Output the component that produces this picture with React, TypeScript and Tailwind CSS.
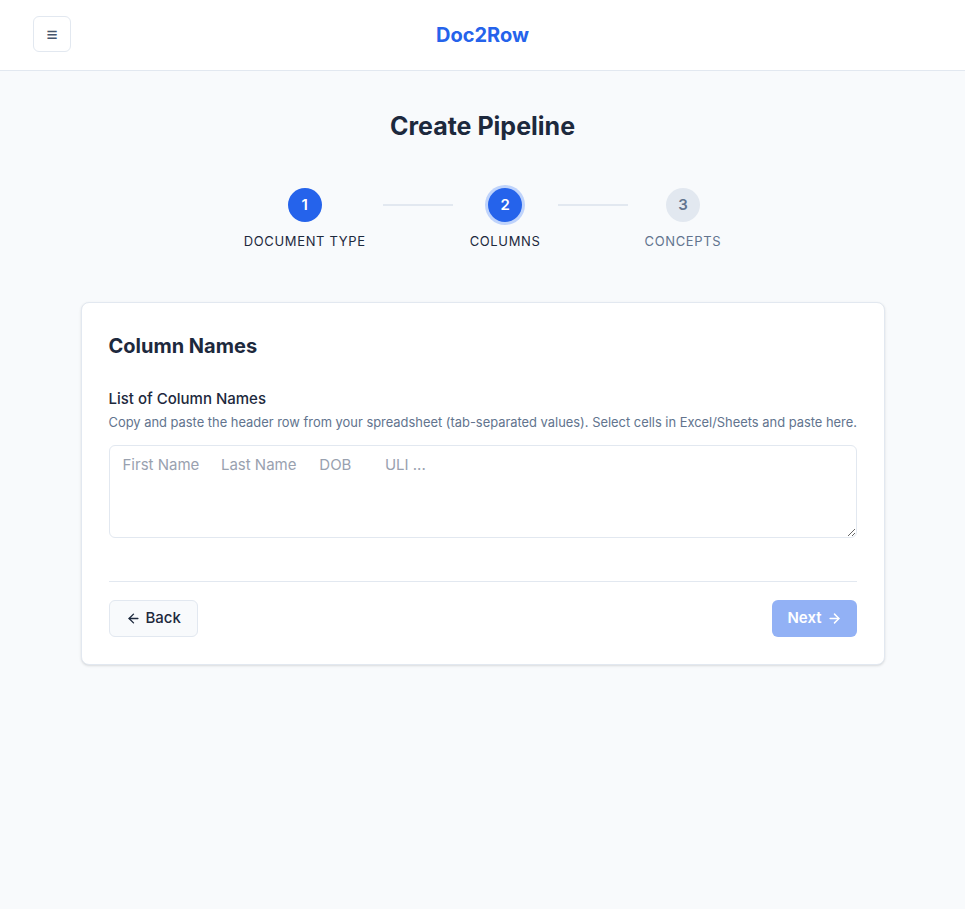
import { ArrowLeft, ArrowRight } from "lucide-react";

const steps = [
  { n: 1, label: "Document Type", state: "done" },
  { n: 2, label: "Columns", state: "active" },
  { n: 3, label: "Concepts", state: "todo" },
];

function Stepper() {
  return (
    <div className="flex items-start justify-center gap-[17px]">
      {steps.map((s, i) => (
        <div key={s.n} className="flex items-start gap-[17px]">
          {i > 0 && <div className="mt-[16px] h-[2px] w-[70px] bg-slate-200" />}
          <div className="flex flex-col items-center">
            <div
              className={
                s.state === "todo"
                  ? "flex h-[34px] w-[34px] items-center justify-center rounded-full bg-slate-200 text-[15px] font-semibold text-slate-500"
                  : s.state === "active"
                    ? "flex h-[34px] w-[34px] items-center justify-center rounded-full bg-[#2563eb] text-[15px] font-semibold text-white ring-[3px] ring-[#bfd3fb]"
                    : "flex h-[34px] w-[34px] items-center justify-center rounded-full bg-[#2563eb] text-[15px] font-semibold text-white"
              }
            >
              {s.n}
            </div>
            <div
              className={
                s.state === "todo"
                  ? "mt-[10px] text-[13px] uppercase tracking-[0.05em] text-slate-500"
                  : "mt-[10px] text-[13px] uppercase tracking-[0.05em] text-slate-800"
              }
            >
              {s.label}
            </div>
          </div>
        </div>
      ))}
    </div>
  );
}

export default function App() {
  return (
    <div
      className="min-h-screen bg-slate-50 text-slate-800"
      style={{ fontFamily: "Inter, 'Noto Sans', sans-serif" }}
    >
      <header className="relative flex h-[71px] items-center justify-center border-b border-slate-200 bg-white">
        <button className="absolute left-[33px] top-[16px] flex h-[36px] w-[38px] items-center justify-center rounded-md border border-slate-200 bg-white text-slate-600">
          <span className="text-[19px] font-bold leading-none">≡</span>
        </button>
        <h1 className="text-[20px] font-bold text-[#2563eb]">Doc2Row</h1>
      </header>

      <main className="flex flex-col items-center pt-[39px]">
        <h2 className="text-[25px] font-bold leading-[32px] text-slate-800">Create Pipeline</h2>

        <div className="mt-[46px]">
          <Stepper />
        </div>

        <section className="mt-[50px] w-[804px] rounded-lg border border-slate-200 bg-white p-[27px] shadow-sm">
          <h3 className="mt-[2px] text-[20px] font-bold leading-[28px] text-slate-800">Column Names</h3>

          <div className="mt-[29px]">
            <label className="block text-[15px] font-medium leading-[20px] text-slate-800">
              List of Column Names
            </label>
            <p className="mt-[4px] whitespace-nowrap text-[12.9px] leading-[20px] text-slate-500">
              Copy and paste the header row from your spreadsheet (tab-separated values). Select cells in Excel/Sheets
              and paste here.
            </p>
            <textarea
              className="mt-[12px] block h-[93px] w-full rounded-md border border-slate-200 px-[13px] py-[9px] text-[15px] leading-[20px] text-slate-800 [tab-size:32.8px] placeholder:text-gray-400 focus:outline-none"
              placeholder={"First Name\tLast Name\tDOB\tULI ..."}
            />
          </div>

          <div className="mt-[43px] flex items-center justify-between border-t border-slate-200 pt-[18px]">
            <button className="flex h-[37px] items-center gap-[5px] rounded-md border border-slate-200 bg-slate-50 px-[16px] text-[15px] font-medium text-slate-800">
              <ArrowLeft size={15} strokeWidth={2.2} />
              Back
            </button>
            <button
              disabled
              className="flex h-[37px] items-center gap-[5px] rounded-md bg-[#2563eb]/50 px-[15px] text-[15px] font-semibold text-white"
            >
              Next
              <ArrowRight size={15} strokeWidth={2.4} />
            </button>
          </div>
        </section>
      </main>
    </div>
  );
}
